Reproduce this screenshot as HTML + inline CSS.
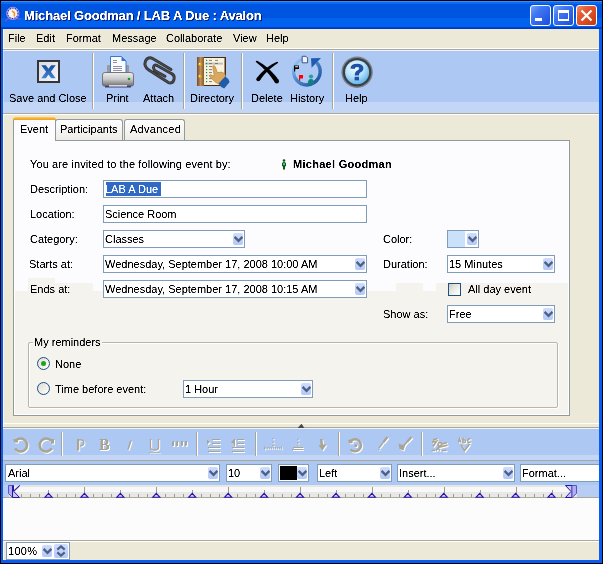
<!DOCTYPE html>
<html><head><meta charset="utf-8"><style>
*{margin:0;padding:0;box-sizing:border-box}
html,body{width:603px;height:564px;overflow:hidden;background:#000}
body{position:relative;font-family:"Liberation Sans",sans-serif;font-size:11px;color:#000}
.a{position:absolute}
svg.a{overflow:visible}
.t{position:absolute;white-space:nowrap;line-height:11px;height:11px;filter:url(#th)}
.inp{position:absolute;border:1px solid #7f9db9;background:#fff;height:18px}
.cb{position:absolute;width:10px;height:12px;border-radius:2px;background:linear-gradient(#cfdcfd,#b4c8f7)}
.cb svg{position:absolute;left:1px;top:3px}
.sep{position:absolute;width:2px;background:linear-gradient(90deg,#a7a595 0,#a7a595 1px,#fff 1px)}
</style></head><body>
<svg width="0" height="0" style="position:absolute"><filter id="th"><feComponentTransfer><feFuncA type="linear" slope="2" intercept="-0.4"/></feComponentTransfer></filter></svg>

<div class="a" style="left:0px;top:0px;width:603px;height:564px;background:#0831d9;"></div>
<div class="a" style="left:0;top:0;width:603px;height:564px;border:1px solid #000"></div>
<div class="a" style="left:1px;top:1px;width:601px;height:28px;background:linear-gradient(#3d8bff 0,#3d8bff 1px,#0a6af8 1px,#0a6af8 3px,#0055e0 3px,#0055e0 17px,#0062ee 17px,#0062ee 26px,#0044d0 26px,#0038c4 28px);"></div>
<div class="a" style="left:1px;top:29px;width:2px;height:531px;background:#0a5cf0;"></div>
<div class="a" style="left:599px;top:29px;width:3px;height:531px;background:#0a5cf0;"></div>
<div class="a" style="left:1px;top:560px;width:601px;height:3px;background:#0a5cf0;"></div>
<div class="t" style="left:25px;top:10px;font-size:13px;line-height:13px;height:13px;font-weight:bold;color:#0a1e6e;letter-spacing:-0.17px">Michael Goodman / LAB A Due : Avalon</div>
<div class="t" style="left:24px;top:9px;font-size:13px;line-height:13px;height:13px;font-weight:bold;color:#fff;letter-spacing:-0.17px">Michael Goodman / LAB A Due : Avalon</div>
<svg class="a" style="left:3px;top:4px" width="20" height="20" viewBox="0 0 20 20">
<path d="M2.2 17.3 L5.5 14.2 L17.5 14.8" fill="none" stroke="#6a58c8" stroke-width="1.5"/>
<circle cx="9.8" cy="9.4" r="5.7" fill="#ececf2" stroke="#a098e4" stroke-width="1.8"/>
<circle cx="9.8" cy="9.4" r="5.2" fill="none" stroke="#2424a0" stroke-width="1.1" stroke-dasharray="1 1.6"/>
<circle cx="9.8" cy="9.4" r="3.6" fill="#f6f6fa"/>
<path d="M9 6.9 L11.4 8.9 L11.3 12.4" fill="none" stroke="#ff9000" stroke-width="1.5"/>
</svg>
<div class="a" style="left:530px;top:5px;width:21px;height:21px;background:linear-gradient(135deg,#7aa6fa 0,#4479f2 30%,#2d62ea 65%,#1d4fd6);border:1px solid #fff;border-radius:3px"></div>
<div class="a" style="left:535px;top:18px;width:7px;height:3px;background:#fff;"></div>
<div class="a" style="left:553px;top:5px;width:21px;height:21px;background:linear-gradient(135deg,#7aa6fa 0,#4479f2 30%,#2d62ea 65%,#1d4fd6);border:1px solid #fff;border-radius:3px"></div>
<div class="a" style="left:558px;top:10px;width:11px;height:11px;border:1px solid #fff;border-top-width:3px;border-bottom-width:2px"></div>
<div class="a" style="left:576px;top:5px;width:21px;height:21px;background:linear-gradient(135deg,#f09070 0,#e45c32 30%,#d94a20 65%,#c03810);border:1px solid #fff;border-radius:3px"></div>
<svg class="a" style="left:576px;top:5px" width="21" height="21" viewBox="0 0 21 21"><path d="M5.5 5.5 L15.5 15.5 M15.5 5.5 L5.5 15.5" stroke="#fff" stroke-width="2.2"/></svg>
<div class="a" style="left:3px;top:29px;width:596px;height:531px;background:#ece9d8;"></div>
<div class="a" style="left:3px;top:29px;width:1px;height:531px;background:#fff8e4;"></div>
<div class="t" style="left:8px;top:33px;">File</div>
<div class="t" style="left:36px;top:33px;">Edit</div>
<div class="t" style="left:66px;top:33px;">Format</div>
<div class="t" style="left:112px;top:33px;">Message</div>
<div class="t" style="left:166px;top:33px;">Collaborate</div>
<div class="t" style="left:233px;top:33px;">View</div>
<div class="t" style="left:266px;top:33px;">Help</div>
<div class="a" style="left:3px;top:48px;width:596px;height:1px;background:#fff;"></div>
<div class="a" style="left:3px;top:49px;width:596px;height:1px;background:#aca899;"></div>
<div class="a" style="left:3px;top:50px;width:596px;height:1px;background:#eef3fc;"></div>
<div class="a" style="left:3px;top:51px;width:596px;height:51px;background:#aec8f4;"></div>
<div class="a" style="left:3px;top:102px;width:596px;height:11px;background:#c3d6f6;"></div>
<div class="a" style="left:3px;top:51px;width:1px;height:62px;background:#c8daf8;"></div>
<div class="a" style="left:3px;top:113px;width:596px;height:1px;background:#aca899;"></div>
<div class="a" style="left:3px;top:114px;width:596px;height:1px;background:#fff;"></div>
<div class="sep" style="left:92px;top:53px;height:56px"></div>
<div class="sep" style="left:183px;top:53px;height:56px"></div>
<div class="sep" style="left:241px;top:53px;height:56px"></div>
<div class="sep" style="left:332px;top:53px;height:56px"></div>
<!-- toolbar icons -->
<svg class="a" style="left:37px;top:60px" width="23" height="23" viewBox="0 0 23 23">
<defs><linearGradient id="sg" x1="0" y1="0" x2="1" y2="1"><stop offset="0" stop-color="#d6dae6"/><stop offset="1" stop-color="#f8f8fb"/></linearGradient></defs>
<rect x="1" y="1" width="21" height="21" fill="url(#sg)" stroke="#353535" stroke-width="2"/>
<defs><linearGradient id="xg" x1="0" y1="0" x2="0" y2="1"><stop offset="0" stop-color="#1a4c98"/><stop offset="1" stop-color="#3c86d8"/></linearGradient></defs><path d="M4.3 5.3 L8.8 5.3 L11.5 8.8 L14.2 5.3 L18.7 5.3 L13.9 11.7 L18.7 18.2 L14.2 18.2 L11.5 14.6 L8.8 18.2 L4.3 18.2 L9.1 11.7 Z" fill="url(#xg)"/>
</svg>

<svg class="a" style="left:100px;top:54px" width="36" height="36" viewBox="0 0 36 36">
<defs><linearGradient id="pb" x1="0" y1="0" x2="0" y2="1"><stop offset="0" stop-color="#f0f0f0"/><stop offset="0.5" stop-color="#c8c8c8"/><stop offset="1" stop-color="#6e6e6e"/></linearGradient></defs>
<rect x="7" y="11" width="22" height="9" rx="1" fill="#9a9a9a"/>
<path d="M10.5 2.5 L21.5 2.5 L26 7 L26 19 L10.5 19 Z" fill="#fafcff" stroke="#3a78d0" stroke-width="1"/>
<path d="M21.5 2.5 L26 7 L21.5 7 Z" fill="#3a78d0"/>
<path d="M13 6.5h4 M13 8.5h4 M13 12.5h9 M13 14.5h9 M13 16.5h9" stroke="#9090a0" stroke-width="1"/>
<path d="M2.5 21 Q2.5 18.5 5 18.5 L31 18.5 Q33.5 18.5 33.5 21 L33.5 30.5 Q33.5 32 31.5 32 L4.5 32 Q2.5 32 2.5 30.5 Z" fill="url(#pb)" stroke="#606060" stroke-width="0.8"/>
<rect x="5" y="32" width="26" height="1.5" fill="#3c3c80"/>
<rect x="9" y="31" width="18" height="1.6" fill="#d8d8d8"/>
<circle cx="29" cy="25" r="1.3" fill="#10a020"/>
</svg>

<svg class="a" style="left:140px;top:54px" width="36" height="36" viewBox="0 0 36 36">
<path d="M31 15.5 L13 4.8 Q8 2 5.5 7 Q3.5 12.5 8.8 16 L28 28.3 Q32.5 30.5 34 25.5 Q35 21 31.3 19.5 L17 11.5 Q13.5 10 13.5 14 Q14 16 15.5 17 L25 22.3" fill="none" stroke="#363636" stroke-width="3" stroke-linecap="round" stroke-linejoin="round"/>
<path d="M31 15.5 L13 4.8 Q8 2 5.5 7 Q3.5 12.5 8.8 16 L28 28.3 Q32.5 30.5 34 25.5 Q35 21 31.3 19.5 L17 11.5 Q13.5 10 13.5 14 Q14 16 15.5 17 L25 22.3" fill="none" stroke="#6a6a6a" stroke-width="0.5" stroke-linecap="round" stroke-linejoin="round"/>
</svg>

<svg class="a" style="left:194px;top:54px" width="36" height="36" viewBox="0 0 36 36">
<defs><linearGradient id="sp" x1="0" y1="0" x2="1" y2="0"><stop offset="0" stop-color="#7a4a20"/><stop offset="0.5" stop-color="#c09058"/><stop offset="1" stop-color="#8a5a28"/></linearGradient></defs>
<rect x="3" y="3" width="29" height="29" fill="#4a2a10"/>
<rect x="3" y="3" width="7" height="29" fill="url(#sp)"/>
<circle cx="6" cy="10.2" r="1.6" fill="#e8b020"/><circle cx="5.6" cy="9.7" r="0.6" fill="#fff"/>
<circle cx="6" cy="22.3" r="1.6" fill="#e8b020"/><circle cx="5.6" cy="21.8" r="0.6" fill="#fff"/>
<rect x="10" y="4" width="20.5" height="27" fill="#faf3dc"/>
<rect x="11" y="8.6" width="18" height="2" fill="#c0c0c0"/>
<g fill="#108870"><rect x="12" y="5.8" width="1.2" height="1.2"/><rect x="12" y="8.9" width="1.2" height="1.2"/><rect x="12" y="11.9" width="1.2" height="1.2"/><rect x="12" y="15" width="1.2" height="1.2"/><rect x="12" y="18" width="1.2" height="1.2"/><rect x="12" y="21" width="1.2" height="1.2"/><rect x="12" y="24" width="1.2" height="1.2"/><rect x="12" y="27" width="1.2" height="1.2"/></g>
<g stroke="#707070" stroke-width="0.9"><path d="M15 6.4h3 M21 6.4h3 M15 9.5h3 M21 9.5h3 M15 12.5h3 M15 15.6h3 M15 18.6h3 M15 21.6h3 M15 24.6h3 M15 27.6h3 M21 27.6h2"/></g>
<path d="M18.6 12.2 Q20 10.8 21.2 12.6 L23.4 18.6 Q27.5 17.2 30.5 19.5 Q32 21.5 31.5 25 L30 28 L25.5 30.5 Q21 28.5 17.5 24.5 L15.8 22.6 Q15 21 16.6 20.8 L20.3 22.2 Z" fill="#dba862" stroke="#b07a38" stroke-width="0.6"/>
<path d="M24.6 29.6 L31.2 22.6 Q34.5 24.4 35.6 28 L30.2 34.6 Q26.5 33.4 24.6 29.6 Z" fill="#1f5ca8"/>
</svg>

<svg class="a" style="left:250px;top:54px" width="36" height="36" viewBox="0 0 36 36"><path d="M5.69 7.71 L6.50 8.60 L7.39 9.34 L8.29 10.07 L9.18 10.80 L10.07 11.54 L10.94 12.30 L11.81 13.06 L12.67 13.84 L13.52 14.63 L14.36 15.44 L15.18 16.26 L16.00 17.10 L16.81 17.95 L17.60 18.82 L18.39 19.71 L19.16 20.61 L19.93 21.53 L20.68 22.47 L21.43 23.42 L22.16 24.39 L22.88 25.38 L23.60 26.39 L24.30 27.41 L24.99 28.45 L28.61 25.95 L27.82 24.89 L27.02 23.85 L26.22 22.84 L25.39 21.84 L24.56 20.86 L23.72 19.91 L22.86 18.97 L21.99 18.05 L21.11 17.16 L20.22 16.29 L19.32 15.43 L18.40 14.60 L17.47 13.79 L16.53 13.00 L15.58 12.24 L14.62 11.50 L13.64 10.78 L12.66 10.08 L11.65 9.41 L10.64 8.76 L9.61 8.15 L8.56 7.57 L7.49 7.04 L6.31 6.69Z" fill="#000"/><path d="M27.67 7.76 L26.53 8.04 L25.49 8.49 L24.47 8.98 L23.47 9.50 L22.49 10.05 L21.52 10.62 L20.57 11.21 L19.64 11.83 L18.72 12.46 L17.81 13.11 L16.92 13.78 L16.05 14.48 L15.19 15.18 L14.34 15.91 L13.51 16.66 L12.70 17.42 L11.90 18.20 L11.11 19.00 L10.34 19.82 L9.58 20.66 L8.84 21.51 L8.12 22.38 L7.41 23.26 L6.71 24.17 L9.89 26.43 L10.49 25.55 L11.11 24.69 L11.74 23.83 L12.38 22.99 L13.04 22.17 L13.71 21.36 L14.40 20.56 L15.10 19.78 L15.82 19.01 L16.55 18.25 L17.29 17.51 L18.05 16.77 L18.83 16.06 L19.61 15.35 L20.41 14.66 L21.23 13.97 L22.06 13.30 L22.90 12.64 L23.76 11.99 L24.63 11.35 L25.51 10.71 L26.41 10.08 L27.30 9.43 L28.13 8.64Z" fill="#000"/><circle cx="26.8" cy="27.2" r="2.2" fill="#000"/><circle cx="8.3" cy="25.3" r="1.95" fill="#000"/></svg>

<svg class="a" style="left:288px;top:52px" width="36" height="36" viewBox="0 0 36 36">
<defs><linearGradient id="hg" x1="0" y1="0" x2="1" y2="1"><stop offset="0" stop-color="#a8d0f4"/><stop offset="0.45" stop-color="#4a8ad0"/><stop offset="1" stop-color="#1a4c98"/></linearGradient></defs>
<path d="M14.6 7.2 A13.1 13.1 0 1 0 28.4 10.6" fill="none" stroke="url(#hg)" stroke-width="3.8"/>
<path d="M14.6 8.9 A11.4 11.4 0 1 0 27.2 11.8" fill="none" stroke="#c8e2fa" stroke-width="0.8" opacity="0.7"/>
<path d="M23 6.2 L33 6 L23.6 15.8 Z" fill="#1f5cb0"/>
<path d="M14.2 4.3 L18 4.3 L19.6 6 L19.6 10.8 L14.2 10.8 Z" fill="#eef4ff" stroke="#22346a" stroke-width="0.8"/>
<rect x="6" y="13.5" width="5" height="3.5" fill="#000"/><rect x="7.2" y="14.3" width="3" height="1" fill="#fff"/><rect x="6" y="17" width="1.2" height="2.5" fill="#000"/>
<rect x="11" y="23" width="4" height="3.5" fill="#ff0000"/><rect x="11" y="26" width="1.2" height="2.8" fill="#ff0000"/>
<circle cx="23" cy="24.5" r="2.1" fill="#20a0a0"/>
<path d="M19.8 32.5 Q19.5 27 23 27 Q26.5 27 26.2 32.5 Z" fill="#108080"/>
</svg>

<svg class="a" style="left:338px;top:54px" width="36" height="36" viewBox="0 0 36 36">
<defs><radialGradient id="qg" cx="0.4" cy="0.3" r="0.8"><stop offset="0" stop-color="#f4fcff"/><stop offset="0.5" stop-color="#b8e2fa"/><stop offset="1" stop-color="#4aa8e8"/></radialGradient></defs>
<circle cx="19.1" cy="18.2" r="15.7" fill="#7a828c"/>
<circle cx="19.1" cy="18.2" r="14.3" fill="#3a4048"/>
<circle cx="19.1" cy="18.2" r="12" fill="url(#qg)"/>
<path d="M12.4 14.5 Q12.6 9.8 19 9.8 Q25.4 9.9 25.4 14.2 Q25.4 17.2 22.2 18.6 Q20.8 19.4 20.9 21.6 L16.8 21.6 Q16.6 18 19.4 16.6 Q21.2 15.7 21.2 14.3 Q21.1 12.9 19 12.9 Q16.8 12.9 16.6 15 Z" fill="#1f50a8"/>
<rect x="16.6" y="22.8" width="4.4" height="3.6" fill="#1f50a8"/>
</svg>

<div class="t" style="left:9px;top:93px;">Save and Close</div>
<div class="t" style="left:106px;top:93px;">Print</div>
<div class="t" style="left:143px;top:93px;">Attach</div>
<div class="t" style="left:190px;top:93px;">Directory</div>
<div class="t" style="left:251px;top:93px;">Delete</div>
<div class="t" style="left:290px;top:93px;">History</div>
<div class="t" style="left:345px;top:93px;">Help</div>
<div class="a" style="left:13px;top:140px;width:557px;height:276px;background:linear-gradient(#fcfcfe 0,#fcfcfe 142px,#f4f3ee 142px);border:1px solid #919b9c"></div>
<div class="a" style="left:14px;top:283px;width:14px;height:8px;background:#fcfcfe;"></div>
<div class="a" style="left:14px;top:414px;width:555px;height:1px;background:#fff;"></div>
<div class="a" style="left:568px;top:141px;width:1px;height:274px;background:#fff;"></div>
<div class="a" style="left:14px;top:141px;width:1px;height:274px;background:#fff;"></div>
<div class="a" style="left:28px;top:278px;width:27px;height:5px;background:#f4f3ee;"></div>
<div class="a" style="left:93px;top:283px;width:10px;height:8px;background:#fcfcfe;"></div>
<div class="a" style="left:367px;top:283px;width:29px;height:8px;background:#fcfcfe;"></div>
<div class="a" style="left:423px;top:283px;width:13px;height:8px;background:#fcfcfe;"></div>
<div class="a" style="left:55px;top:119px;width:68px;height:22px;background:linear-gradient(#fefefe,#ecebe6);border:1px solid #919b9c;border-bottom:0;border-radius:3px 3px 0 0"></div>
<div class="a" style="left:124px;top:119px;width:61px;height:22px;background:linear-gradient(#fefefe,#ecebe6);border:1px solid #919b9c;border-bottom:0;border-radius:3px 3px 0 0"></div>
<div class="a" style="left:55px;top:140px;width:130px;height:1px;background:#919b9c;"></div>
<div class="a" style="left:13px;top:120px;width:43px;height:21px;background:#fcfcfe;border:1px solid #919b9c;border-top:0;border-bottom:0"></div>
<div class="a" style="left:13px;top:117px;width:43px;height:3px;background:linear-gradient(#ffd060,#f8b030 50%,#e8a020);border-radius:3px 3px 0 0"></div>
<div class="t" style="left:20px;top:124px;">Event</div>
<div class="t" style="left:60px;top:124px;">Participants</div>
<div class="t" style="left:130px;top:124px;letter-spacing:0.28px">Advanced</div>
<div class="t" style="left:30px;top:159px;letter-spacing:0.1px">You are invited to the following event by:</div>
<svg class="a" style="left:281px;top:158px" width="7" height="12" viewBox="0 0 7 12"><circle cx="3" cy="2.5" r="1.3" fill="#005a10"/><path d="M1 5.5 Q1 4 3 4 Q5 4 5 5.5 L5 7.5 Q5 8.5 4 8.5 L4 11.5 L2 11.5 L2 8.5 Q1 8.5 1 7.5 Z" fill="#005a10"/><rect x="2.2" y="5.2" width="1.6" height="2" fill="#7fd8c8"/></svg>
<div class="t" style="left:293px;top:159px;font-weight:bold;letter-spacing:0.28px">Michael Goodman</div>
<div class="t" style="left:30px;top:184px;">Description:</div>
<div class="t" style="left:30px;top:209px;">Location:</div>
<div class="t" style="left:30px;top:234px;">Category:</div>
<div class="t" style="left:29px;top:259px;">Starts at:</div>
<div class="t" style="left:30px;top:284px;">Ends at:</div>
<div class="inp" style="left:103px;top:180px;width:264px"></div>
<div class="a" style="left:106px;top:182px;width:55px;height:14px;background:#316ac5;"></div>
<div class="t" style="left:105px;top:184px;color:#fff">LAB A Due</div>
<div class="inp" style="left:103px;top:205px;width:264px"></div>
<div class="t" style="left:105px;top:209px;">Science Room</div>
<div class="inp" style="left:103px;top:230px;width:142px;height:18px;background:#fff"></div>
<div class="cb" style="left:233px;top:233px"><svg width="9" height="7" viewBox="0 0 9 7"><path d="M0.6 0.9 L4.5 4.8 L8.4 0.9" fill="none" stroke="#4d6185" stroke-width="2.3"/></svg></div>
<div class="t" style="left:105px;top:234px;">Classes</div>
<div class="inp" style="left:103px;top:255px;width:264px;height:18px;background:#fff"></div>
<div class="cb" style="left:355px;top:258px"><svg width="9" height="7" viewBox="0 0 9 7"><path d="M0.6 0.9 L4.5 4.8 L8.4 0.9" fill="none" stroke="#4d6185" stroke-width="2.3"/></svg></div>
<div class="t" style="left:105px;top:259px;">Wednesday, September 17, 2008 10:00 AM</div>
<div class="inp" style="left:103px;top:280px;width:264px;height:18px;background:#fff"></div>
<div class="cb" style="left:355px;top:283px"><svg width="9" height="7" viewBox="0 0 9 7"><path d="M0.6 0.9 L4.5 4.8 L8.4 0.9" fill="none" stroke="#4d6185" stroke-width="2.3"/></svg></div>
<div class="t" style="left:105px;top:284px;">Wednesday, September 17, 2008 10:15 AM</div>
<div class="t" style="left:383px;top:234px;">Color:</div>
<div class="t" style="left:383px;top:259px;">Duration:</div>
<div class="t" style="left:383px;top:309px;">Show as:</div>
<div class="inp" style="left:447px;top:230px;width:32px;height:18px;background:#fff"></div>
<div class="cb" style="left:467px;top:233px"><svg width="9" height="7" viewBox="0 0 9 7"><path d="M0.6 0.9 L4.5 4.8 L8.4 0.9" fill="none" stroke="#4d6185" stroke-width="2.3"/></svg></div>
<div class="a" style="left:448px;top:231px;width:17px;height:16px;background:#c9e1f9;"></div>
<div class="inp" style="left:447px;top:255px;width:108px;height:18px;background:#fff"></div>
<div class="cb" style="left:543px;top:258px"><svg width="9" height="7" viewBox="0 0 9 7"><path d="M0.6 0.9 L4.5 4.8 L8.4 0.9" fill="none" stroke="#4d6185" stroke-width="2.3"/></svg></div>
<div class="t" style="left:449px;top:259px;">15 Minutes</div>
<div class="a" style="left:448px;top:283px;width:13px;height:13px;border:1px solid #1c5180;background:linear-gradient(135deg,#c8c8c0 0,#e4e4de 35%,#f8f8f6 75%,#fff)"></div>
<div class="t" style="left:468px;top:284px;">All day event</div>
<div class="inp" style="left:447px;top:305px;width:108px;height:18px;background:#fff"></div>
<div class="cb" style="left:543px;top:308px"><svg width="9" height="7" viewBox="0 0 9 7"><path d="M0.6 0.9 L4.5 4.8 L8.4 0.9" fill="none" stroke="#4d6185" stroke-width="2.3"/></svg></div>
<div class="t" style="left:449px;top:309px;">Free</div>
<div class="a" style="left:29px;top:343px;width:530px;height:66px;border:1px solid #fff;border-radius:2px"></div>
<div class="a" style="left:28px;top:342px;width:530px;height:66px;border:1px solid #b8b6a8;border-radius:2px"></div>
<div class="a" style="left:33px;top:336px;width:69px;height:12px;background:#f4f3ee;"></div>
<div class="t" style="left:34px;top:337px;">My reminders</div>
<div class="a" style="left:37px;top:357px;width:13px;height:13px;border:1px solid #1c5180;border-radius:50%;background:linear-gradient(135deg,#dcdcd7,#fff)"></div>
<div class="a" style="left:41px;top:361px;width:5px;height:5px;border-radius:50%;background:#21a121"></div>
<div class="t" style="left:55px;top:359px;">None</div>
<div class="a" style="left:37px;top:382px;width:13px;height:13px;border:1px solid #1c5180;border-radius:50%;background:linear-gradient(135deg,#dcdcd7,#fff)"></div>
<div class="t" style="left:55px;top:384px;">Time before event:</div>
<div class="inp" style="left:183px;top:380px;width:130px;height:18px;background:#fff"></div>
<div class="cb" style="left:301px;top:383px"><svg width="9" height="7" viewBox="0 0 9 7"><path d="M0.6 0.9 L4.5 4.8 L8.4 0.9" fill="none" stroke="#4d6185" stroke-width="2.3"/></svg></div>
<div class="t" style="left:185px;top:384px;">1 Hour</div>
<div class="a" style="left:3px;top:423px;width:596px;height:1px;background:#fff;"></div>
<div class="a" style="left:3px;top:427px;width:596px;height:1px;background:#aca899;"></div>
<svg class="a" style="left:297px;top:423px" width="8" height="5" viewBox="0 0 8 5"><path d="M0.6 5 L4.5 0.8 L7.4 5 Z" fill="#484848"/></svg>
<div class="a" style="left:3px;top:428px;width:596px;height:1px;background:#eef3fc;"></div>
<div class="a" style="left:3px;top:429px;width:596px;height:26px;background:#aec8f4;"></div>
<div class="a" style="left:3px;top:455px;width:596px;height:5px;background:#c3d6f6;"></div>
<div class="a" style="left:3px;top:460px;width:596px;height:1px;background:#aca899;"></div>
<div class="a" style="left:3px;top:461px;width:596px;height:24px;background:#aec8f4;"></div>
<svg class="a" style="left:10px;top:435px" width="22" height="20" viewBox="0 0 22 20"><g transform="translate(1,1)" fill="#fff" stroke="#fff" ><path d="M5.6 5.8 A6.5 6.5 0 1 1 5 13.4" fill="none" stroke-width="2.6"/><path d="M3 4.3 L8 4.3 L8 7.6 L4.5 7.6 Z" stroke="none"/></g><g fill="#a9a494" stroke="#a9a494" ><path d="M5.6 5.8 A6.5 6.5 0 1 1 5 13.4" fill="none" stroke-width="2.6"/><path d="M3 4.3 L8 4.3 L8 7.6 L4.5 7.6 Z" stroke="none"/></g></svg>
<svg class="a" style="left:36px;top:435px" width="22" height="20" viewBox="0 0 22 20"><g transform="translate(1,1)" fill="#fff" stroke="#fff" ><path d="M15.2 5.8 A6.5 6.5 0 1 0 15.8 13.4" fill="none" stroke-width="2.6"/><path d="M15 4 L18 4 L18 8.6 L15 8.6 Z" stroke="none"/></g><g fill="#a9a494" stroke="#a9a494" ><path d="M15.2 5.8 A6.5 6.5 0 1 0 15.8 13.4" fill="none" stroke-width="2.6"/><path d="M15 4 L18 4 L18 8.6 L15 8.6 Z" stroke="none"/></g></svg>
<div class="sep" style="left:61px;top:432px;height:24px"></div>
<div class="sep" style="left:196px;top:432px;height:24px"></div>
<div class="sep" style="left:255px;top:432px;height:24px"></div>
<div class="sep" style="left:338px;top:432px;height:24px"></div>
<div class="sep" style="left:421px;top:432px;height:24px"></div>
<svg class="a" style="left:75px;top:437px" width="12" height="16" viewBox="0 0 12 16"><g transform="translate(1,1)" fill="#fff" stroke="#fff" ><rect x="2" y="2" width="2.2" height="11.5" stroke="none"/><path d="M4 2.8 L6 2.8 Q8.8 3 8.8 5.8 Q8.8 8.6 6 8.8 L5 8.8" fill="none" stroke-width="1.3"/></g><g fill="#a9a494" stroke="#a9a494" ><rect x="2" y="2" width="2.2" height="11.5" stroke="none"/><path d="M4 2.8 L6 2.8 Q8.8 3 8.8 5.8 Q8.8 8.6 6 8.8 L5 8.8" fill="none" stroke-width="1.3"/></g></svg>
<div class="t" style="left:99px;top:438px;font-family:'Liberation Serif',serif;font-weight:bold;font-size:16px;line-height:14px;height:14px;color:#fff;margin:1px 0 0 1px">B</div>
<div class="t" style="left:99px;top:438px;font-family:'Liberation Serif',serif;font-weight:bold;font-size:16px;line-height:14px;height:14px;color:#a9a494">B</div>
<svg class="a" style="left:125px;top:438px" width="10" height="14" viewBox="0 0 10 14"><g transform="translate(1,1)" fill="#fff" stroke="#fff" ><path d="M6 2.5 L3 11.5" fill="none" stroke-width="1.5"/></g><g fill="#a9a494" stroke="#a9a494" ><path d="M6 2.5 L3 11.5" fill="none" stroke-width="1.5"/></g></svg>
<svg class="a" style="left:148px;top:437px" width="15" height="17" viewBox="0 0 15 17"><g transform="translate(1,1)" fill="#fff" stroke="#fff" ><path d="M2.5 2 L2.5 10.5 Q2.5 13 6.5 13 Q10.5 13 10.5 10.5 L10.5 2" fill="none" stroke-width="1.3"/><path d="M1.5 15.5 L12 15.5" fill="none" stroke-width="1" stroke-dasharray="1 1"/></g><g fill="#a9a494" stroke="#a9a494" ><path d="M2.5 2 L2.5 10.5 Q2.5 13 6.5 13 Q10.5 13 10.5 10.5 L10.5 2" fill="none" stroke-width="1.3"/><path d="M1.5 15.5 L12 15.5" fill="none" stroke-width="1" stroke-dasharray="1 1"/></g></svg>
<svg class="a" style="left:170px;top:439px" width="20" height="10" viewBox="0 0 20 10"><g transform="translate(1,1)" fill="#fff" stroke="#fff" ><path d="M2 3.5 Q2 2 3.5 2 L4 2 L4 7 L2 7 Z M6 3.5 Q6 2 7.5 2 L8 2 L8 7 L6 7 Z M11 2 L13 2 L13 5.5 Q13 7 11.5 7 L11 7 Z M15 2 L17 2 L17 5.5 Q17 7 15.5 7 L15 7 Z" stroke="none"/></g><g fill="#a9a494" stroke="#a9a494" ><path d="M2 3.5 Q2 2 3.5 2 L4 2 L4 7 L2 7 Z M6 3.5 Q6 2 7.5 2 L8 2 L8 7 L6 7 Z M11 2 L13 2 L13 5.5 Q13 7 11.5 7 L11 7 Z M15 2 L17 2 L17 5.5 Q17 7 15.5 7 L15 7 Z" stroke="none"/></g></svg>
<svg class="a" style="left:206px;top:438px" width="16" height="16" viewBox="0 0 16 16"><g transform="translate(1,1)" fill="#fff" stroke="#fff" ><path d="M1 1.5 L4 4 L1 6.5 Z" stroke="none"/><rect x="6" y="1" width="8" height="1" stroke="none"/><rect x="6" y="5" width="8" height="1" stroke="none"/><rect x="2" y="9" width="12" height="1" stroke="none"/><rect x="2" y="13" width="12" height="1" stroke="none"/></g><g fill="#a9a494" stroke="#a9a494" ><path d="M1 1.5 L4 4 L1 6.5 Z" stroke="none"/><rect x="6" y="1" width="8" height="1" stroke="none"/><rect x="6" y="5" width="8" height="1" stroke="none"/><rect x="2" y="9" width="12" height="1" stroke="none"/><rect x="2" y="13" width="12" height="1" stroke="none"/></g></svg>
<svg class="a" style="left:230px;top:438px" width="16" height="16" viewBox="0 0 16 16"><g transform="translate(1,1)" fill="#fff" stroke="#fff" ><path d="M4 1.5 L1 4 L4 6.5 Z" stroke="none"/><rect x="4" y="1" width="1" height="7" stroke="none"/><rect x="7" y="1" width="7" height="1" stroke="none"/><rect x="7" y="5" width="7" height="1" stroke="none"/><rect x="2" y="9" width="12" height="1" stroke="none"/><rect x="2" y="13" width="12" height="1" stroke="none"/></g><g fill="#a9a494" stroke="#a9a494" ><path d="M4 1.5 L1 4 L4 6.5 Z" stroke="none"/><rect x="4" y="1" width="1" height="7" stroke="none"/><rect x="7" y="1" width="7" height="1" stroke="none"/><rect x="7" y="5" width="7" height="1" stroke="none"/><rect x="2" y="9" width="12" height="1" stroke="none"/><rect x="2" y="13" width="12" height="1" stroke="none"/></g></svg>
<svg class="a" style="left:263px;top:437px" width="20" height="15" viewBox="0 0 20 15"><g transform="translate(1,1)" fill="#fff" stroke="#fff" ><path d="M10 1v1.5 M10 4.5v1.5 M10 8v1.5 M1.5 11h17" fill="none" stroke-width="1.3" stroke-dasharray="1.2 0.9"/><path d="M1.5 9.5v4 M18.5 9.5v4" fill="none" stroke-width="1" stroke-dasharray="1 1"/></g><g fill="#a9a494" stroke="#a9a494" ><path d="M10 1v1.5 M10 4.5v1.5 M10 8v1.5 M1.5 11h17" fill="none" stroke-width="1.3" stroke-dasharray="1.2 0.9"/><path d="M1.5 9.5v4 M18.5 9.5v4" fill="none" stroke-width="1" stroke-dasharray="1 1"/></g></svg>
<svg class="a" style="left:291px;top:437px" width="14" height="15" viewBox="0 0 14 15"><g transform="translate(1,1)" fill="#fff" stroke="#fff" ><path d="M7 1.5v1.5 M7 5v1.5 M7 8.5v1" fill="none" stroke-width="1"/><rect x="2" y="10" width="10" height="1" stroke="none"/><rect x="1" y="12" width="11" height="1" stroke="none"/></g><g fill="#a9a494" stroke="#a9a494" ><path d="M7 1.5v1.5 M7 5v1.5 M7 8.5v1" fill="none" stroke-width="1"/><rect x="2" y="10" width="10" height="1" stroke="none"/><rect x="1" y="12" width="11" height="1" stroke="none"/></g></svg>
<svg class="a" style="left:317px;top:438px" width="13" height="16" viewBox="0 0 13 16"><g transform="translate(1,1)" fill="#fff" stroke="#fff" ><path d="M3 1 L5.5 1 L6 6.5 L9.5 6.5 L5.5 12.5 L1.5 7.5 L3.5 7 Z" stroke="none"/></g><g fill="#a9a494" stroke="#a9a494" ><path d="M3 1 L5.5 1 L6 6.5 L9.5 6.5 L5.5 12.5 L1.5 7.5 L3.5 7 Z" stroke="none"/></g></svg>
<svg class="a" style="left:346px;top:437px" width="20" height="17" viewBox="0 0 20 17"><g transform="translate(1,1)" fill="#fff" stroke="#fff" ><path d="M4.5 4.3 A6 6 0 1 1 4.5 12.3" fill="none" stroke-width="2.6"/><path d="M2 2.8 L6.5 2.8 L6.5 6.3 L3 6.3 Z" stroke="none"/><rect x="8.5" y="7.5" width="2.5" height="2.5" stroke="none"/></g><g fill="#a9a494" stroke="#a9a494" ><path d="M4.5 4.3 A6 6 0 1 1 4.5 12.3" fill="none" stroke-width="2.6"/><path d="M2 2.8 L6.5 2.8 L6.5 6.3 L3 6.3 Z" stroke="none"/><rect x="8.5" y="7.5" width="2.5" height="2.5" stroke="none"/></g></svg>
<svg class="a" style="left:376px;top:435px" width="15" height="18" viewBox="0 0 15 18"><g transform="translate(1,1)" fill="#fff" stroke="#fff" ><path d="M11.5 2 L7.5 7" fill="none" stroke-width="2.4"/><path d="M7.5 7 L3 13" fill="none" stroke-width="1.3"/><path d="M3.5 12 L2.5 15.5" fill="none" stroke-width="1" stroke-dasharray="1 1"/></g><g fill="#a9a494" stroke="#a9a494" ><path d="M11.5 2 L7.5 7" fill="none" stroke-width="2.4"/><path d="M7.5 7 L3 13" fill="none" stroke-width="1.3"/><path d="M3.5 12 L2.5 15.5" fill="none" stroke-width="1" stroke-dasharray="1 1"/></g></svg>
<svg class="a" style="left:397px;top:435px" width="18" height="18" viewBox="0 0 18 18"><g transform="translate(1,1)" fill="#fff" stroke="#fff" ><path d="M14.5 2 L10 7" fill="none" stroke-width="2.4"/><path d="M10 7 L5.5 12" fill="none" stroke-width="1.6"/><path d="M1.5 8.5 L5.5 10 L8.5 9 L6.5 15.5 L2.5 14 Z" stroke="none"/></g><g fill="#a9a494" stroke="#a9a494" ><path d="M14.5 2 L10 7" fill="none" stroke-width="2.4"/><path d="M10 7 L5.5 12" fill="none" stroke-width="1.6"/><path d="M1.5 8.5 L5.5 10 L8.5 9 L6.5 15.5 L2.5 14 Z" stroke="none"/></g></svg>
<svg class="a" style="left:430px;top:437px" width="20" height="16" viewBox="0 0 20 16"><g transform="translate(1,1)" fill="#fff" stroke="#fff" ><path d="M3 3 L7.5 1.5 M2 5.2 L6.5 4.2 L3 9.5 M8 7 Q9 4.8 11.2 5.8 Q12.5 8 10.2 9.2 Q8 9.2 8 7 M12.5 7 L17 5.5 M8 10.5 L17.5 8.2" fill="none" stroke-width="1.7"/><path d="M1.5 13.5h3.5 M6 13.5 L8 11 L10 13.5 M12 13.5h4.5" fill="none" stroke-width="1.5"/></g><g fill="#a9a494" stroke="#a9a494" ><path d="M3 3 L7.5 1.5 M2 5.2 L6.5 4.2 L3 9.5 M8 7 Q9 4.8 11.2 5.8 Q12.5 8 10.2 9.2 Q8 9.2 8 7 M12.5 7 L17 5.5 M8 10.5 L17.5 8.2" fill="none" stroke-width="1.7"/><path d="M1.5 13.5h3.5 M6 13.5 L8 11 L10 13.5 M12 13.5h4.5" fill="none" stroke-width="1.5"/></g></svg>
<svg class="a" style="left:457px;top:437px" width="17" height="16" viewBox="0 0 17 16"><g transform="translate(1,1)" fill="#fff" stroke="#fff" ><path d="M1.5 5.5 L2.5 1.5 L4 5.5 M6 0.8 L6 5.5 Q8.5 6 8.5 4 Q8.5 2.5 6 3 M13.5 2 Q10.5 1.2 10.8 4 Q11 6.2 13.5 5.2" fill="none" stroke-width="1.4"/><path d="M4 8 L7.5 13.5 L12.5 7" fill="none" stroke-width="1.6"/></g><g fill="#a9a494" stroke="#a9a494" ><path d="M1.5 5.5 L2.5 1.5 L4 5.5 M6 0.8 L6 5.5 Q8.5 6 8.5 4 Q8.5 2.5 6 3 M13.5 2 Q10.5 1.2 10.8 4 Q11 6.2 13.5 5.2" fill="none" stroke-width="1.4"/><path d="M4 8 L7.5 13.5 L12.5 7" fill="none" stroke-width="1.6"/></g></svg>
<div class="inp" style="left:5px;top:464px;width:215px;height:18px;background:#fff"></div>
<div class="cb" style="left:208px;top:467px"><svg width="9" height="7" viewBox="0 0 9 7"><path d="M0.6 0.9 L4.5 4.8 L8.4 0.9" fill="none" stroke="#4d6185" stroke-width="2.3"/></svg></div>
<div class="t" style="left:8px;top:468px;">Arial</div>
<div class="inp" style="left:226px;top:464px;width:46px;height:18px;background:#fff"></div>
<div class="cb" style="left:260px;top:467px"><svg width="9" height="7" viewBox="0 0 9 7"><path d="M0.6 0.9 L4.5 4.8 L8.4 0.9" fill="none" stroke="#4d6185" stroke-width="2.3"/></svg></div>
<div class="t" style="left:228px;top:468px;">10</div>
<div class="inp" style="left:278px;top:464px;width:31px;height:18px;background:#fff"></div>
<div class="cb" style="left:297px;top:467px"><svg width="9" height="7" viewBox="0 0 9 7"><path d="M0.6 0.9 L4.5 4.8 L8.4 0.9" fill="none" stroke="#4d6185" stroke-width="2.3"/></svg></div>
<div class="a" style="left:280px;top:466px;width:17px;height:14px;background:#000;"></div>
<div class="inp" style="left:317px;top:464px;width:75px;height:18px;background:#fff"></div>
<div class="cb" style="left:380px;top:467px"><svg width="9" height="7" viewBox="0 0 9 7"><path d="M0.6 0.9 L4.5 4.8 L8.4 0.9" fill="none" stroke="#4d6185" stroke-width="2.3"/></svg></div>
<div class="t" style="left:319px;top:468px;">Left</div>
<div class="inp" style="left:397px;top:464px;width:118px;height:18px;background:#fff"></div>
<div class="cb" style="left:503px;top:467px"><svg width="9" height="7" viewBox="0 0 9 7"><path d="M0.6 0.9 L4.5 4.8 L8.4 0.9" fill="none" stroke="#4d6185" stroke-width="2.3"/></svg></div>
<div class="t" style="left:399px;top:468px;">Insert...</div>
<div class="inp" style="left:520px;top:464px;width:79px;height:18px;border-right:0"></div>
<div class="t" style="left:522px;top:468px;">Format...</div>
<div class="a" style="left:3px;top:485px;width:596px;height:12px;background:linear-gradient(#e6e6e6 0,#e6e6e6 2px,#f8f8f8 2px,#f8f8f8 7px,#e8e8e8 7px);"></div>
<div class="a" style="left:3px;top:485px;width:6px;height:12px;background:#b8cdf4;"></div>
<div class="a" style="left:577px;top:485px;width:22px;height:12px;background:#b8cdf4;"></div>
<div class="a" style="left:3px;top:497px;width:596px;height:1px;background:#aca899;"></div>
<svg class="a" style="left:0px;top:485px" width="603" height="13" viewBox="0 0 603 13"><path d="M21.5 9v3" stroke="#a09a84" stroke-width="1"/><path d="M30.5 9v3" stroke="#a09a84" stroke-width="1"/><path d="M39.5 9v3" stroke="#a09a84" stroke-width="1"/><path d="M48.5 5v7" stroke="#a09a84" stroke-width="1"/><path d="M57.5 9v3" stroke="#a09a84" stroke-width="1"/><path d="M66.5 9v3" stroke="#a09a84" stroke-width="1"/><path d="M75.5 9v3" stroke="#a09a84" stroke-width="1"/><path d="M84.5 2v10" stroke="#a09a84" stroke-width="1"/><path d="M93.5 9v3" stroke="#a09a84" stroke-width="1"/><path d="M102.5 9v3" stroke="#a09a84" stroke-width="1"/><path d="M111.5 9v3" stroke="#a09a84" stroke-width="1"/><path d="M120.5 5v7" stroke="#a09a84" stroke-width="1"/><path d="M129.5 9v3" stroke="#a09a84" stroke-width="1"/><path d="M138.5 9v3" stroke="#a09a84" stroke-width="1"/><path d="M147.5 9v3" stroke="#a09a84" stroke-width="1"/><path d="M156.5 2v10" stroke="#a09a84" stroke-width="1"/><path d="M165.5 9v3" stroke="#a09a84" stroke-width="1"/><path d="M174.5 9v3" stroke="#a09a84" stroke-width="1"/><path d="M183.5 9v3" stroke="#a09a84" stroke-width="1"/><path d="M192.5 5v7" stroke="#a09a84" stroke-width="1"/><path d="M201.5 9v3" stroke="#a09a84" stroke-width="1"/><path d="M210.5 9v3" stroke="#a09a84" stroke-width="1"/><path d="M219.5 9v3" stroke="#a09a84" stroke-width="1"/><path d="M228.5 2v10" stroke="#a09a84" stroke-width="1"/><path d="M237.5 9v3" stroke="#a09a84" stroke-width="1"/><path d="M246.5 9v3" stroke="#a09a84" stroke-width="1"/><path d="M255.5 9v3" stroke="#a09a84" stroke-width="1"/><path d="M264.5 5v7" stroke="#a09a84" stroke-width="1"/><path d="M273.5 9v3" stroke="#a09a84" stroke-width="1"/><path d="M282.5 9v3" stroke="#a09a84" stroke-width="1"/><path d="M291.5 9v3" stroke="#a09a84" stroke-width="1"/><path d="M300.5 2v10" stroke="#a09a84" stroke-width="1"/><path d="M309.5 9v3" stroke="#a09a84" stroke-width="1"/><path d="M318.5 9v3" stroke="#a09a84" stroke-width="1"/><path d="M327.5 9v3" stroke="#a09a84" stroke-width="1"/><path d="M336.5 5v7" stroke="#a09a84" stroke-width="1"/><path d="M345.5 9v3" stroke="#a09a84" stroke-width="1"/><path d="M354.5 9v3" stroke="#a09a84" stroke-width="1"/><path d="M363.5 9v3" stroke="#a09a84" stroke-width="1"/><path d="M372.5 2v10" stroke="#a09a84" stroke-width="1"/><path d="M381.5 9v3" stroke="#a09a84" stroke-width="1"/><path d="M390.5 9v3" stroke="#a09a84" stroke-width="1"/><path d="M399.5 9v3" stroke="#a09a84" stroke-width="1"/><path d="M408.5 5v7" stroke="#a09a84" stroke-width="1"/><path d="M417.5 9v3" stroke="#a09a84" stroke-width="1"/><path d="M426.5 9v3" stroke="#a09a84" stroke-width="1"/><path d="M435.5 9v3" stroke="#a09a84" stroke-width="1"/><path d="M444.5 2v10" stroke="#a09a84" stroke-width="1"/><path d="M453.5 9v3" stroke="#a09a84" stroke-width="1"/><path d="M462.5 9v3" stroke="#a09a84" stroke-width="1"/><path d="M471.5 9v3" stroke="#a09a84" stroke-width="1"/><path d="M480.5 5v7" stroke="#a09a84" stroke-width="1"/><path d="M489.5 9v3" stroke="#a09a84" stroke-width="1"/><path d="M498.5 9v3" stroke="#a09a84" stroke-width="1"/><path d="M507.5 9v3" stroke="#a09a84" stroke-width="1"/><path d="M516.5 2v10" stroke="#a09a84" stroke-width="1"/><path d="M525.5 9v3" stroke="#a09a84" stroke-width="1"/><path d="M534.5 9v3" stroke="#a09a84" stroke-width="1"/><path d="M543.5 9v3" stroke="#a09a84" stroke-width="1"/><path d="M552.5 5v7" stroke="#a09a84" stroke-width="1"/><path d="M561.5 9v3" stroke="#a09a84" stroke-width="1"/><path d="M570.5 9v3" stroke="#a09a84" stroke-width="1"/></svg>
<svg class="a" style="left:0px;top:485px" width="603" height="13" viewBox="0 0 603 13"><path d="M48.50 8.3 L44.90 12.3 L52.10 12.3 Z" fill="#d8d8fc" stroke="#2810a8" stroke-width="1.1"/><path d="M84.43 8.3 L80.83 12.3 L88.03 12.3 Z" fill="#d8d8fc" stroke="#2810a8" stroke-width="1.1"/><path d="M120.36 8.3 L116.76 12.3 L123.96 12.3 Z" fill="#d8d8fc" stroke="#2810a8" stroke-width="1.1"/><path d="M156.29 8.3 L152.69 12.3 L159.89 12.3 Z" fill="#d8d8fc" stroke="#2810a8" stroke-width="1.1"/><path d="M192.22 8.3 L188.62 12.3 L195.82 12.3 Z" fill="#d8d8fc" stroke="#2810a8" stroke-width="1.1"/><path d="M228.15 8.3 L224.55 12.3 L231.75 12.3 Z" fill="#d8d8fc" stroke="#2810a8" stroke-width="1.1"/><path d="M264.08 8.3 L260.48 12.3 L267.68 12.3 Z" fill="#d8d8fc" stroke="#2810a8" stroke-width="1.1"/><path d="M300.01 8.3 L296.41 12.3 L303.61 12.3 Z" fill="#d8d8fc" stroke="#2810a8" stroke-width="1.1"/><path d="M335.94 8.3 L332.34 12.3 L339.54 12.3 Z" fill="#d8d8fc" stroke="#2810a8" stroke-width="1.1"/><path d="M371.87 8.3 L368.27 12.3 L375.47 12.3 Z" fill="#d8d8fc" stroke="#2810a8" stroke-width="1.1"/><path d="M407.80 8.3 L404.20 12.3 L411.40 12.3 Z" fill="#d8d8fc" stroke="#2810a8" stroke-width="1.1"/><path d="M443.73 8.3 L440.13 12.3 L447.33 12.3 Z" fill="#d8d8fc" stroke="#2810a8" stroke-width="1.1"/><path d="M479.66 8.3 L476.06 12.3 L483.26 12.3 Z" fill="#d8d8fc" stroke="#2810a8" stroke-width="1.1"/><path d="M515.59 8.3 L511.99 12.3 L519.19 12.3 Z" fill="#d8d8fc" stroke="#2810a8" stroke-width="1.1"/><path d="M551.52 8.3 L547.92 12.3 L555.12 12.3 Z" fill="#d8d8fc" stroke="#2810a8" stroke-width="1.1"/></svg>
<svg class="a" style="left:8px;top:485px" width="14" height="13" viewBox="0 0 14 13"><path d="M0.5 0.5 L4.5 0.5 L4.5 12.5 L0.5 8.5 Z" fill="#b0b0f0" stroke="#6050c8" stroke-width="1"/><path d="M4.5 0.5 L5.5 0.5 L5.5 6 L11.5 0.5 L11.5 1 L5.8 6.5 L11.5 12.5 L4.5 12.5 Z" fill="#c8c8f8" stroke="#2818a0" stroke-width="1"/></svg>
<svg class="a" style="left:565px;top:485px" width="13" height="13" viewBox="0 0 13 13"><path d="M0.5 0.5 L7 0.5 L7 12.5 L0.5 12.5 L6 6.5 Z" fill="#c8c8f8" stroke="#2818a0" stroke-width="1"/><path d="M7 0.5 L11.5 0.5 L11.5 8.5 L7 12.5 Z" fill="#b0b0f0" stroke="#6050c8" stroke-width="1"/></svg>
<div class="a" style="left:3px;top:498px;width:596px;height:42px;background:#fcfcfc;"></div>
<div class="a" style="left:3px;top:540px;width:596px;height:1px;background:#aca899;"></div>
<div class="a" style="left:3px;top:541px;width:596px;height:1px;background:#fff;"></div>
<div class="inp" style="left:6px;top:542px;width:64px;height:18px"></div>
<div class="t" style="left:8px;top:546px;letter-spacing:0.3px">100%</div>
<div class="cb" style="left:42px;top:545px;width:10px;height:12px"><svg width="9" height="7" viewBox="0 0 9 7"><path d="M0.6 0.9 L4.5 4.8 L8.4 0.9" fill="none" stroke="#4d6185" stroke-width="2.3"/></svg></div>
<div class="a" style="left:54px;top:544px;width:14px;height:14px;border-radius:2px;background:linear-gradient(#cfdcfd,#b4c8f7)"><svg style="position:absolute;left:2px;top:1px" width="10" height="12" viewBox="0 0 10 12"><path d="M1.3 4.6 L5 1.4 L8.7 4.6 M1.3 7.4 L5 10.6 L8.7 7.4" fill="none" stroke="#4d6185" stroke-width="2.2"/></svg></div>
</body></html>
